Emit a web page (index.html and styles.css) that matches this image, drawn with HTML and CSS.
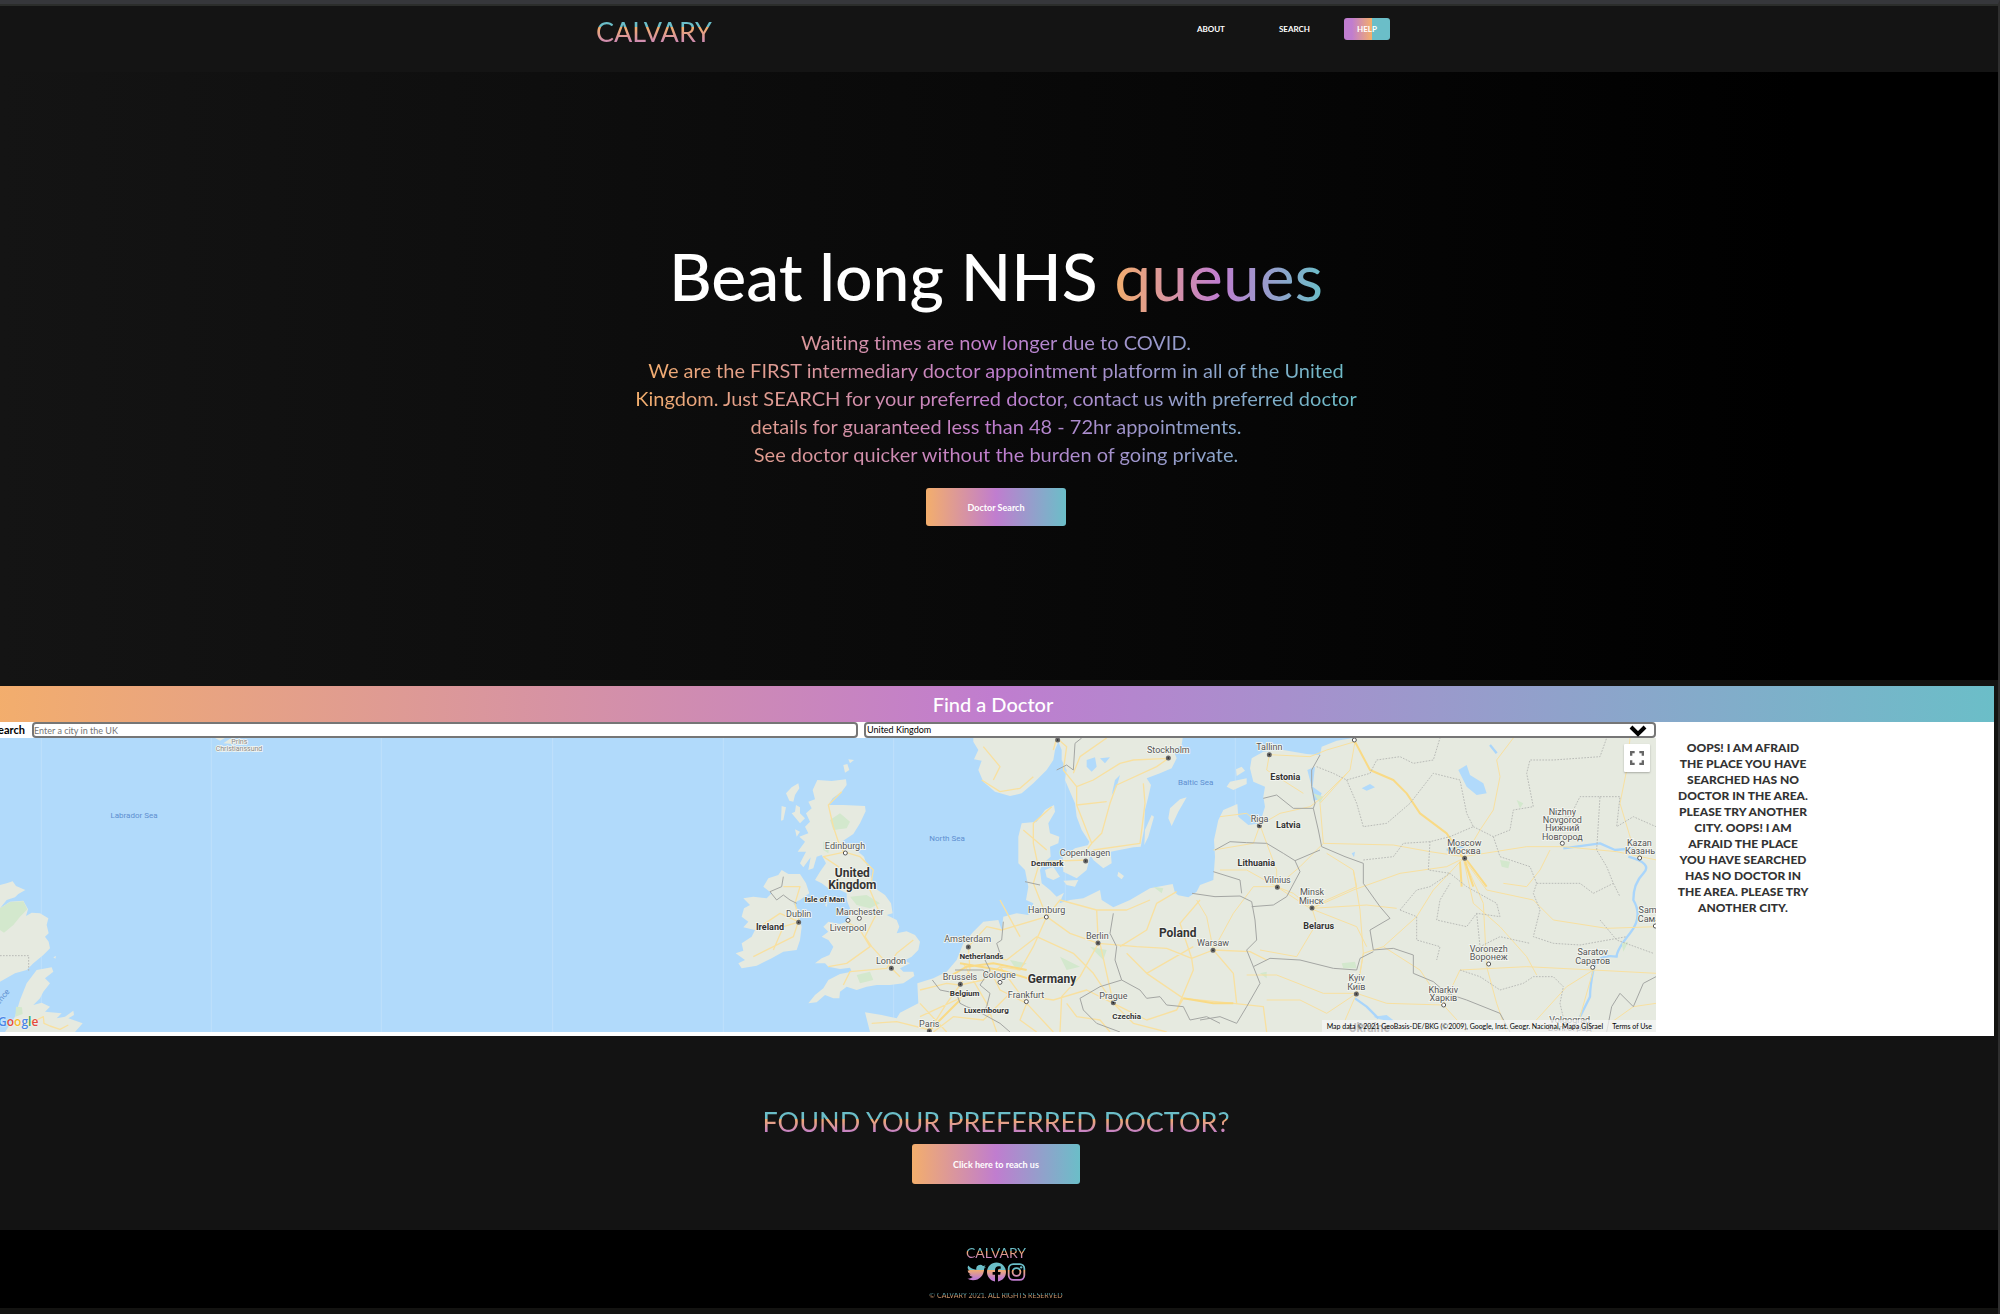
FILE: index.html
```html
<!DOCTYPE html>
<html lang="en">
<head>
<meta charset="utf-8">
<title>Calvary</title>
<link rel="stylesheet" href="styles.css">
</head>
<body>
<header class="navbar">
  <div class="navbar-inner">
    <a class="logo text-vertical" href="#">CALVARY</a>
    <nav class="nav">
      <a class="nav-link" href="#about">ABOUT</a>
      <a class="nav-link" href="#search">SEARCH</a>
      <a class="nav-button" href="#help">HELP</a>
    </nav>
  </div>
</header>

<section class="hero" id="about">
  <h1 class="hero-title">Beat long NHS <span class="text-horizontal">queues</span></h1>
  <p class="hero-text text-horizontal">Waiting times are now longer due to COVID.<br>We are the FIRST intermediary doctor appointment platform in all of the United Kingdom. Just SEARCH for your preferred doctor, contact us with preferred doctor details for guaranteed less than 48 - 72hr appointments.<br>See doctor quicker without the burden of going private.</p>
  <button class="button" type="button">Doctor Search</button>
</section>

<section class="finder" id="search">
  <h2 class="finder-title">Find a Doctor</h2>
  <div class="finder-body">
    <div class="finder-main">
      <form class="finder-form">
        <label class="finder-label" for="city">Search</label>
        <input class="field city" id="city" type="text" placeholder="Enter a city in the UK">
        <div class="select-wrap">
          <select class="field" aria-label="Country"><option>United Kingdom</option></select>
          <svg class="chevron" viewBox="0 0 18 12" aria-hidden="true"><path d="M2 2 9 9 16 2"/></svg>
        </div>
      </form>
      <div class="map">
        <svg class="map-art" viewBox="-24 0 4992 882" preserveAspectRatio="xMaxYMin slice" role="img" aria-label="Map of Europe">
          <g class="tiles"><path d="M124 0V882M634 0V882M1144 0V882M1658 0V882M2170 0V882M2681 0V882M3196 0V882M3706 0V300"/></g>
          <g transform="translate(0 -204)">
            <path class="land" d="M-40 640 0 645 20 640 38 634 48 648 76 660 55 672 45 682 20 690 0 715 30 695 70 692 84 718 78 738 95 728 120 730 145 745 140 765 146 790 135 800 146 815 150 835 130 855 100 880 80 900 45 910 0 935-40 950ZM110 900 155 892 160 905 135 925 150 940 130 965 120 985 100 1005 125 998 150 1010 135 1025 185 1030 170 1045 195 1040 220 1022 222 1035 205 1045 248 1060 225 1086H15L45 1040 60 990 80 940ZM645 204 660 212 675 204ZM670 220 690 206 715 216 700 222ZM160 862 168 858 166 866Z"/>
            <path class="park" d="M0 715 30 696 70 694 82 718 60 740 40 765 12 788 0 780ZM48 1010 66 1012 68 1032 46 1040Z"/>
            <path class="admin" d="M0 857H86V902"/>
            <path class="road" d="M60 1065 110 1050 130 1040 132 1060 150 1068 180 1078 205 1065"/>
          </g>
          <g transform="translate(2100 -204)">
            <path class="land" d="M352 330 395 333 438 328 440 345 425 365 398 385 385 405 430 405 495 408 497 424 480 460 460 492 425 515 475 545 492 560 507 605 525 655 555 675 573 700 578 730 560 735 590 750 598 770 590 790 620 784 645 795 660 815 655 840 635 860 612 872 630 880 600 895 610 905 640 905 643 918 610 940 570 945 530 945 500 950 470 960 440 950 420 965 418 985 400 985 375 975 350 997 325 1000 345 975 370 955 385 930 420 912 455 905 450 893 420 897 385 890 375 880 345 880 365 865 388 855 400 830 385 810 365 800 385 785 370 770 385 755 420 762 440 755 452 720 440 690 440 670 420 660 385 655 365 640 345 630 360 605 378 580 365 555 350 560 340 595 325 600 332 562 310 592 300 580 318 545 293 545 315 515 298 500 325 490 315 470 330 455 318 430 335 415 325 395 345 388 338 360Z"/>
            <path class="land" d="M245 600 265 612 300 612 318 640 328 670 300 690 280 700 295 720 298 745 305 770 300 810 290 840 250 845 215 865 170 887 125 895 115 880 135 870 107 850 130 842 125 820 155 800 165 780 130 772 145 755 125 740 132 715 150 705 130 685 160 680 200 685 215 670 190 650 205 625 235 615ZM295 340 298 355 285 375 280 395 268 392 258 370 275 352ZM245 408 258 412 250 450 243 452ZM288 405 300 412 300 430 315 445 300 460 275 430 285 425ZM430 285 442 282 448 300 435 308ZM445 268 462 270 450 280ZM285 478 300 485 290 500ZM375 705 383 695 380 712Z"/>
            <path class="land" d="M820 204 820 215 835 240 822 268 845 272 835 300 850 335 885 365 930 378 965 370 1000 340 1040 300 1060 270 1065 240 1075 215 1085 240 1085 270 1100 300 1095 330 1112 370 1125 400 1130 440 1145 480 1168 515 1160 535 1180 570 1210 595 1235 580 1232 545 1300 532 1322 530 1332 480 1335 420 1345 380 1353 345 1340 325 1380 310 1415 295 1430 265 1420 240 1445 225 1448 204Z"/>
            <path class="land" d="M1062 405 1065 425 1045 460 1050 490 1078 500 1075 520 1050 530 1052 560 1030 580 1020 600 1025 640 1050 660 1070 680 1092 668 1078 700 1110 690 1150 685 1200 660 1205 690 1240 712 1290 690 1350 655 1418 642 1425 668 1435 676 1465 682 1490 665 1500 645 1540 630 1545 560 1542 510 1555 450 1570 420 1612 402 1615 440 1645 465 1680 460 1695 410 1690 380 1695 350 1660 335 1650 295 1655 265 1690 245 1750 240 1820 252 1860 255 1865 230 1910 212 1960 204H2870V1086H510L495 1027 545 1035 590 1045 600 1028 655 1000 652 940 700 925 740 905 770 870 790 820 820 785 850 755 895 750 905 780 910 740 950 730 985 735 1000 700 978 690 985 650 975 600 955 580 955 500 965 460 1010 455 1035 420ZM1088 562 1125 535 1165 525 1170 560 1160 600 1130 625 1090 605ZM1035 600 1060 590 1080 620 1060 630 1040 622ZM1090 632 1135 630 1125 650 1100 645ZM1255 605 1272 618 1265 628 1252 618ZM1355 435 1362 440 1345 500 1333 525 1335 480ZM1410 415 1440 388 1460 382 1435 425 1415 468 1405 445ZM1590 335 1640 325 1640 342 1600 360 1580 350ZM1608 298 1625 290 1635 302 1610 318Z"/>
            <path class="water" d="M1822 300 1845 290 1838 350 1865 370 1858 388 1840 392 1835 350ZM2275 300 2300 285 2310 315 2350 340 2360 370 2330 375 2300 350ZM1985 355 2010 342 2025 352 2000 362ZM1160 270 1185 262 1190 290 1175 305 1160 290ZM1235 375 1245 330 1260 315 1250 350ZM1200 265 1230 262 1215 280ZM1955 550 1965 545 1962 562ZM2020 1040 2060 1035 2090 1058 2040 1048Z"/>
            <path class="river" d="M2785 560Q2860 580 2830 610T2800 690Q2830 740 2790 790T2750 860Q2690 850 2680 900T2670 980L2640 1040M1965 985 2000 1010 2035 1045M2370 225 2390 250M2240 540 2290 530M2590 535 2700 520 2745 540 2800 535"/>
            <path class="park" d="M390 450 420 430 450 455 440 475 400 480ZM450 680 500 675 540 700 510 715 470 705ZM470 915 510 905 520 930 480 940ZM1925 880 1965 875 1970 895 1930 895ZM1360 650 1390 655 1385 670ZM1170 830 1220 840 1210 870ZM2400 570 2430 575 2425 595 2405 590ZM930 870 980 880 950 900ZM1080 860 1140 890 1100 900ZM1840 370 1870 380 1860 400ZM2450 390 2470 400 2460 415ZM1680 910 1700 905 1700 925ZM2765 820 2785 815 2770 845ZM370 515 390 510 385 550 370 540Z"/>
            <path class="road" d="M425 365 385 405 400 470 415 515 430 545 480 560 520 600 510 660 535 720 495 800 515 830 570 890 600 920M385 890 440 880 510 830 480 780 440 755M430 945 450 905 560 895 590 850 640 810M400 650 430 600 370 560 440 545M300 755 250 770 220 840M295 755 240 730 165 780M295 755 280 800 160 860M298 755 285 700 300 650 250 650M845 330 900 365 960 355 1000 320M850 230 900 290 880 330M1060 240 1070 204 1100 230 1090 300 1130 350 1130 405 1175 520 1160 540M1405 265 1370 290 1250 345 1230 400 1205 490 1175 520M1130 405 1220 395M1130 350 1180 330 1260 280 1300 270 1405 265M1330 340 1335 400 1320 520 1180 540M1120 310 1140 260 1220 204M1055 410 1000 460 1000 520 1015 590 1000 640 1040 740M970 480 1040 540M1020 575 1160 570"/>
            <path class="road" d="M515 1060 590 1055 690 1080 740 1000 780 945 810 900 805 830 860 770 905 780 1040 740 1110 790 1195 820 1310 830 1400 835 1475 865 1540 840 1650 845 1700 870M660 960 740 940 780 945 850 930 900 890 960 900 1000 830 1040 740 1080 690 1190 720 1195 820 1140 920 1085 980 1080 1086M700 1086 760 1040 850 1050 930 970 1060 990 1160 960 1240 1000 1200 820M900 890 980 1000 960 1050 1010 1086M870 900 900 960 980 1000 1060 1086M840 850 920 870 1010 800 1120 850 1180 910 1240 1000M1240 1000 1300 1060 1400 1086M1240 1000 1340 1050 1430 1020 1480 900 1475 865 1440 760 1500 690M1260 830 1340 780 1370 700 1430 665M1190 720 1280 720 1350 690M1100 1000 1130 1040 1200 1050 1230 1086M1430 1020 1450 985 1600 1000 1690 1010 1700 1086M1540 840 1600 910 1610 1000M1280 850 1340 910 1450 985M1340 910 1480 830M660 1000 740 1086M660 1040 790 980M790 880 860 1000 890 1086M900 690 960 800"/>
            <path class="road thin" d="M1540 840 1520 740 1490 690M1540 840 1600 730 1660 650 1730 650 1830 715 1970 770 2000 830M1540 540 1660 520 1680 465 1640 430 1560 440M1680 465 1740 430 1830 410 1870 380 1950 300 1965 215M1708 254 1830 260 1880 240 1965 215M1708 254 1700 300 1810 370M1680 465 1700 520 1730 600 1730 650M1560 600 1640 600 1730 650 1800 590 1870 520 2080 525 2190 545 2290 560 2480 530 2590 530 2750 545 2870 570M1870 520 1860 400 1950 300M1836 715 1960 660 2100 610 2240 590 2290 565M1836 715 1780 670 1730 650M1836 715 1880 690 1970 650 1960 600 1880 550M1836 715 1850 760 1790 860 1680 840M1836 715 2000 705 2090 715M2290 565 2200 660 2150 740 2050 830 1990 850 1970 970M2290 565 2320 700 2400 770 2480 860 2510 915M2290 565 2360 660 2500 690 2560 750 2720 775 2870 770M2290 565 2350 700 2360 890 2390 1000 2420 1086M2290 565 2340 480 2380 420 2400 320 2390 270 2440 204M1970 970 2060 1000 2230 1005 2280 900 2480 890 2680 900 2870 910M1970 970 1870 970 1730 915 1640 915M1970 970 1880 1030 1800 990 1700 990M1970 970 1990 850 1980 720 1960 600M1970 970 1920 1086M2230 1005 2160 900 2050 830M2230 1005 2280 1060 2300 1086M2680 900 2640 1040 2680 1086M2680 900 2600 950 2500 1060M2790 204 2780 300 2760 400 2790 500 2820 560M2730 1060 2800 1010 2868 1000M2550 540 2520 600 2480 650 2410 640"/>
            <path class="road trunk" d="M1965 215 2010 300 2080 330 2120 370 2160 430 2240 490 2290 565M2280 575 2285 650M2295 575 2320 650M2300 570 2360 650M730 930 800 890 880 880 980 900M780 880 900 900 1000 930M690 1080 780 990M1450 985 1540 1000 1600 1000"/>
            <path class="border" d="M1070 300 1100 285 1120 300 1125 220 1145 204M975 635 1020 645M910 755 905 810 890 820 900 850 855 870 870 900 840 945 870 970 860 1010 845 1030 900 1060 930 1086M697 930 720 960 770 970 780 1000 800 1010 850 1030M765 900 800 900 850 900 860 920M250 620 245 650 210 665 230 690 250 675 270 690 290 700M1240 730 1230 790 1250 830 1245 870 1265 930 1320 960 1340 985 1380 980 1400 1005 1450 1010 1470 1050 1520 1040 1560 1060M1265 930 1200 950 1140 985 1150 1020 1190 1060 1260 1086M1476 670 1545 680 1620 678 1655 695 1665 750 1670 810 1640 840 1660 890 1680 940 1640 1010 1610 1060 1560 1040 1500 1050M1540 605 1620 630 1625 670M1545 540 1590 515 1640 518 1700 520 1750 550 1785 572 1860 540M1690 385 1730 375 1780 415 1840 415 1855 480 1865 530 1935 560 1990 580 1990 640 2040 710 2070 745 2010 780 2020 840 2080 835 2140 855 2140 910 2200 935 2240 970 2300 990 2400 1030 2430 1086M1785 572 1800 605 1760 680 1720 705 1655 710M1860 255 1835 300 1835 350 1845 400 1840 415M1660 890 1710 865 1800 870 1900 895 1970 900 1980 865 2020 845M2720 1086 2735 1010 2760 970 2800 1010 2830 940 2868 920"/>
            <path class="admin" d="M1850 290 1900 310 1940 330 2010 310 2030 270 2100 260 2140 280 2200 270 2220 204M1940 330 1970 400 1990 470 2060 460 2130 400 2200 310 2280 330 2300 430 2320 470 2250 500 2190 515 2185 600 2250 610M2320 470 2380 500 2430 480 2440 420 2500 410 2480 310 2490 270 2560 270 2700 260 2720 204M2380 500 2400 560 2490 590 2510 640 2500 670 2520 720 2500 800 2560 820 2640 825 2780 800M2510 640 2640 640 2680 670 2740 640 2720 590 2690 540 2700 380 2640 380 2610 440 2550 430M1990 570 2080 560 2110 520 2190 515M2100 720 2150 660 2190 650 2250 610 2300 650 2390 700 2400 740 2330 730 2300 770 2210 750 2220 690 2250 640M2100 720 2150 740 2150 810 2220 830 2210 870M2330 730 2340 830 2400 800 2490 820M2280 900 2340 920 2400 960 2470 940 2500 920 2560 920 2590 950 2580 1000 2600 1086M2700 380 2760 380 2750 470 2800 440 2868 470M2740 640 2760 680M2700 750 2750 810 2860 850"/>
            <g class="dots">
              <circle cx="436" cy="549" r="6"/><circle cx="478" cy="745" r="6"/><circle cx="444" cy="751" r="6"/><circle cx="1039" cy="741" r="6"/><circle cx="900" cy="937" r="6"/><circle cx="979" cy="995" r="6"/><circle cx="1963" cy="210" r="6"/><circle cx="2587" cy="520" r="6"/><circle cx="2819" cy="564" r="6"/><circle cx="2366" cy="882" r="6"/><circle cx="2678" cy="892" r="6"/><circle cx="2231" cy="1005" r="6"/><circle cx="2866" cy="768" r="6"/>
            </g>
            <g class="capitals">
              <circle cx="296" cy="757" r="5"/><circle cx="574" cy="895" r="5"/><circle cx="805" cy="831" r="5"/><circle cx="781" cy="943" r="5"/><circle cx="688" cy="1083" r="5"/><circle cx="1157" cy="573" r="5"/><circle cx="1194" cy="819" r="5"/><circle cx="1240" cy="998" r="5"/><circle cx="1073" cy="210" r="5"/><circle cx="1405" cy="264" r="5"/><circle cx="1708" cy="254" r="5"/><circle cx="1678" cy="467" r="5"/><circle cx="1732" cy="652" r="5"/><circle cx="1836" cy="714" r="5"/><circle cx="1539" cy="841" r="5"/><circle cx="2294" cy="565" r="5"/><circle cx="1969" cy="972" r="5"/>
            </g>
            <g class="city-name">
              <text x="435" y="537">Edinburgh</text><text x="296" y="742">Dublin</text><text x="479" y="734">Manchester</text><text x="444" y="782">Liverpool</text><text x="573" y="881">London</text><text x="803" y="817">Amsterdam</text><text x="780" y="930">Brussels</text><text x="898" y="924">Cologne</text><text x="978" y="984">Frankfurt</text><text x="688" y="1071">Paris</text><text x="1155" y="559">Copenhagen</text><text x="1040" y="729">Hamburg</text><text x="1192" y="807">Berlin</text><text x="1240" y="986">Prague</text><text x="1405" y="250">Stockholm</text><text x="1708" y="240">Tallinn</text><text x="1679" y="456">Riga</text><text x="1732" y="640">Vilnius</text><text x="1836" y="676">Minsk</text><text x="1834" y="701">Мінск</text><text x="1539" y="829">Warsaw</text><text x="2293" y="529">Moscow</text><text x="2293" y="553">Москва</text><text x="2587" y="434">Nizhny</text><text x="2587" y="459">Novgorod</text><text x="2587" y="484">Нижний</text><text x="2587" y="509">Новгород</text><text x="2818" y="527">Kazan</text><text x="2820" y="553">Казань</text><text x="2366" y="847">Voronezh</text><text x="2366" y="871">Воронеж</text><text x="2678" y="855">Saratov</text><text x="2678" y="881">Саратов</text><text x="1970" y="934">Kyiv</text><text x="1969" y="960">Київ</text><text x="2230" y="968">Kharkiv</text><text x="2230" y="994">Харків</text><text x="2609" y="1058">Volgograd</text><text x="2609" y="1084">Волгоград</text><text x="2862" y="730">Samara</text><text x="2862" y="756">Самара</text>
            </g>
            <g class="country">
              <text x="374" y="697">Isle of Man</text><text x="1042" y="587">Denmark</text><text x="844" y="866">Netherlands</text><text x="794" y="978">Belgium</text><text x="859" y="1029">Luxembourg</text><text x="1280" y="1048">Czechia</text>
            </g>
            <g class="country medium">
              <text x="210" y="779">Ireland</text><text x="1756" y="330">Estonia</text><text x="1765" y="474">Latvia</text><text x="1669" y="587">Lithuania</text><text x="1856" y="777">Belarus</text>
            </g>
            <g class="country large">
              <text x="457" y="621">United</text><text x="457" y="657">Kingdom</text><text x="1056" y="938">Germany</text><text x="1433" y="802">Poland</text><text x="2008" y="1086">Ukraine</text>
            </g>
            <g class="sea"><text x="741" y="513">North Sea</text><text x="1487" y="345">Baltic Sea</text></g>
          </g>
          <g class="sea" transform="translate(0 -204)"><text x="402" y="443">Labrador Sea</text><text x="-12" y="1016" transform="rotate(-50 -12 1016)">St Lawrence</text></g>
          <g class="village" transform="translate(0 -204)"><text x="718" y="222">Prins</text><text x="717" y="242">Christianssund</text></g>
        </svg>
        <div class="google" aria-label="Google"><span class="g-blue">G</span><span class="g-red">o</span><span class="g-yellow">o</span><span class="g-blue">g</span><span class="g-green">l</span><span class="g-red">e</span></div>
        <button class="fullscreen" type="button" aria-label="Full screen"><svg viewBox="0 0 12 12"><path d="M1 4V1H4M8 1H11V4M11 8V11H8M4 11H1V8"/></svg></button>
        <div class="credits"><span>Map data ©2021 GeoBasis-DE/BKG (©2009), Google, Inst. Geogr. Nacional, Mapa GISrael</span><a href="#terms">Terms of Use</a></div>
      </div>
    </div>
    <aside class="finder-results">
      <p class="message">OOPS! I AM AFRAID THE PLACE YOU HAVE SEARCHED HAS NO DOCTOR IN THE AREA. PLEASE TRY ANOTHER CITY. OOPS! I AM AFRAID THE PLACE YOU HAVE SEARCHED HAS NO DOCTOR IN THE AREA. PLEASE TRY ANOTHER CITY.</p>
    </aside>
  </div>
</section>

<section class="contact" id="help">
  <h2 class="contact-title text-vertical">FOUND YOUR PREFERRED DOCTOR?</h2>
  <button class="button wide" type="button">Click here to reach us</button>
</section>

<footer class="footer">
  <a class="footer-logo text-vertical" href="#">CALVARY</a>
  <div class="social">
    <a href="#twitter" aria-label="Twitter"><svg viewBox="0 0 16 16"><defs><linearGradient id="brand" gradientUnits="userSpaceOnUse" x1="0" y1="16" x2="0" y2="0"><stop offset=".17" stop-color="#c07dcf"/><stop offset=".62" stop-color="#f3ae6c"/><stop offset=".62" stop-color="#6bbec8"/></linearGradient></defs><path fill="url(#brand)" d="M5.026 15c6.038 0 9.341-5.003 9.341-9.334 0-.14 0-.282-.006-.422A6.685 6.685 0 0 0 16 3.542a6.658 6.658 0 0 1-1.889.518 3.301 3.301 0 0 0 1.447-1.817 6.533 6.533 0 0 1-2.087.793A3.286 3.286 0 0 0 7.875 6.03a9.325 9.325 0 0 1-6.767-3.429 3.289 3.289 0 0 0 1.018 4.382A3.323 3.323 0 0 1 .64 6.575v.045a3.288 3.288 0 0 0 2.632 3.218 3.203 3.203 0 0 1-.865.115 3.23 3.23 0 0 1-.614-.057 3.283 3.283 0 0 0 3.067 2.277A6.588 6.588 0 0 1 .78 13.58a6.32 6.32 0 0 1-.78-.045A9.344 9.344 0 0 0 5.026 15z"/></svg></a>
    <a href="#facebook" aria-label="Facebook"><svg viewBox="0 0 16 16"><path fill="url(#brand)" d="M16 8.049c0-4.446-3.582-8.05-8-8.05C3.58 0-.002 3.603-.002 8.05c0 4.017 2.926 7.347 6.75 7.951v-5.625h-2.03V8.05H6.75V6.275c0-2.017 1.195-3.131 3.022-3.131.876 0 1.791.157 1.791.157v1.98h-1.009c-.993 0-1.303.621-1.303 1.258v1.51h2.218l-.354 2.326H9.25V16c3.824-.604 6.75-3.934 6.75-7.951z"/></svg></a>
    <a href="#instagram" aria-label="Instagram"><svg viewBox="0 0 16 16"><g fill="none" stroke="url(#brand)" stroke-width="1.5"><rect x="1.4" y="1.4" width="13.2" height="13.2" rx="3.8"/><circle cx="8" cy="8" r="3.3"/></g><circle cx="11.9" cy="4.1" r="1" fill="url(#brand)"/></svg></a>
  </div>
  <p class="copyright">© CALVARY 2021. ALL RIGHTS RESERVED</p>
</footer>
</body>
</html>
```

FILE: styles.css
```css
:root {
  --orange: #f3ae6c;
  --purple: #c07dcf;
  --teal: #6bbec8;
  --brand: linear-gradient(to right, var(--orange) 0%, var(--purple) 50%, var(--teal) 100%);
  --brand-up: linear-gradient(to top, var(--purple) 17%, var(--orange) 60%, var(--teal) 60%);
}

* { box-sizing: border-box; }

body {
  margin: 0;
  min-height: 100vh;
  display: flex;
  flex-direction: column;
  background: #131311;
  color: #fff;
  font-family: Lato, "Open Sans", sans-serif;
  font-variant-ligatures: none;
  border-top: 4px solid #36373b;
  border-right: 2px solid #2f2f2f;
}

h1, h2, p { margin: 0; font-weight: 400; }
a { color: inherit; text-decoration: none; }
button, input, select { font-family: inherit; }

.text-horizontal, .text-vertical {
  color: transparent;
  background: var(--brand);
  -webkit-background-clip: text;
  background-clip: text;
}
.text-vertical { background-image: var(--brand-up); }

.navbar {
  background: #141414;
  border-top: 2px solid #2b2d2b;
  padding: 2px 12px 0 0;
  height: 68px;
}
.navbar-inner {
  max-width: 794px;
  margin: 0 auto;
  display: flex;
  justify-content: space-between;
  align-items: flex-start;
}
.logo { font-size: 27px; line-height: 48px; }
.nav { display: flex; margin-top: 10px; font-size: 8px; line-height: 22px; font-weight: 700; }
.nav-link { margin-right: 54px; }
.nav-link + .nav-button { margin-left: -20px; }
.nav-button {
  width: 46px;
  border-radius: 3px;
  text-align: center;
  background: linear-gradient(to right, var(--purple) 17%, var(--orange) 60%, var(--teal) 60%);
}

.hero {
  min-height: 608px;
  padding: 163px 6px 0 0;
  margin-bottom: 6px;
  background: linear-gradient(to right, #141414, #000 90%);
  display: flex;
  flex-direction: column;
  align-items: center;
  text-align: center;
}
.hero-title { font-size: 66px; line-height: 82px; font-weight: 500; margin-bottom: 11px; }
.hero-title span { font-weight: 400; }
.hero-text { font-size: 20px; line-height: 28px; max-width: 724px; margin-bottom: 20px; }

.button {
  width: 140px;
  height: 38px;
  padding: 0;
  border: 0;
  border-radius: 3px;
  background: var(--brand);
  color: #fff;
  font-size: 9px;
  font-weight: 700;
}
.button.wide { width: 168px; height: 40px; }

.finder {
  margin: 0 4px 0 -8px;
  background: #fff;
  color: #111;
}
.finder-title {
  background: var(--brand);
  color: #fff;
  text-align: center;
  font-size: 20px;
  line-height: 36px;
  font-weight: 500;
}
.finder-body { display: flex; }
.finder-main { flex: 1; min-width: 0; padding-bottom: 4px; }
.finder-form { display: flex; height: 16px; align-items: stretch; }
.finder-label { width: 40px; font-size: 11px; line-height: 16px; font-weight: 700; color: #000; }
.field {
  display: block;
  height: 16px;
  min-width: 0;
  padding: 0 1px;
  border: 2px solid #767676;
  border-radius: 4px;
  background: #fff;
  color: #000;
  font-size: 9px;
  line-height: 12px;
}
.field::placeholder { color: #757575; }
.city { flex: 824; margin-right: 6px; padding: 0; }
.select-wrap { flex: 794; min-width: 0; position: relative; }
.select-wrap .field { width: 100%; appearance: none; }
.chevron {
  position: absolute;
  right: 9px;
  top: 3px;
  width: 18px;
  height: 12px;
  fill: none;
  stroke: #000;
  stroke-width: 4;
  pointer-events: none;
}

.map { position: relative; height: 294px; overflow: hidden; background: #b1dafb; }
.map-art { display: block; width: 100%; height: 100%; font-family: Roboto, sans-serif; }
.land { fill: #e6eae0; }
.park { fill: #d3e8cd; }
.water { fill: #b1dafb; }
.tiles { fill: none; stroke: #bfe0fb; stroke-width: 3; }
.river, .road, .border, .admin { fill: none; stroke-linejoin: round; }
.river { stroke: #a9d5fb; stroke-width: 7; }
.road { stroke: #f8e0a0; stroke-width: 4; }
.thin { stroke-width: 3; }
.trunk { stroke: #f9da85; stroke-width: 6; }
.border { stroke: #a4a6a3; stroke-width: 3; }
.admin { stroke: #b9bbb7; stroke-width: 3; stroke-dasharray: 5 4; }
.dots { fill: #fff; stroke: #555; stroke-width: 3; }
.capitals { fill: #222; stroke: #666; stroke-width: 5; }
.map-art text { text-anchor: middle; paint-order: stroke; stroke: #f4f6f1; stroke-width: 5; }
.city-name { font-size: 27px; fill: #555; }
.country { font-size: 24px; font-weight: 700; fill: #333; }
.medium { font-size: 27px; }
.large { font-size: 36px; }
.village { font-size: 21px; fill: #888; }
.map-art .sea text { font-size: 24px; fill: #5e8fd0; stroke: none; }

.google {
  position: absolute;
  left: 6px;
  bottom: 1px;
  font-family: "Open Sans", sans-serif;
  font-size: 12px;
  line-height: 18px;
  font-weight: 600;
  text-shadow: 0 0 2px #fff;
}
.g-blue { color: #4a86e8; }
.g-red { color: #e3493b; }
.g-yellow { color: #f4b92c; }
.g-green { color: #3aa757; }
.fullscreen {
  position: absolute;
  top: 6px;
  right: 6px;
  width: 26px;
  height: 28px;
  padding: 0;
  border: 0;
  border-radius: 1px;
  background: #fff;
  box-shadow: 0 1px 2px #0004;
  display: grid;
  place-items: center;
}
.fullscreen svg { width: 14px; height: 14px; fill: none; stroke: #666; stroke-width: 2; }
.credits {
  position: absolute;
  right: 0;
  bottom: 0;
  display: flex;
  font-size: 7px;
  line-height: 12px;
  color: #000;
}
.credits > * { padding: 0 4px 0 5px; background: #f5f5f5bb; }

.finder-results { width: 338px; padding: 18px 0 0 19px; }
.message { width: 136px; text-align: center; font-size: 12px; line-height: 16px; font-weight: 900; color: #333; }

.contact {
  min-height: 194px;
  padding: 69px 6px 46px 0;
  background: #131313;
  display: flex;
  flex-direction: column;
  align-items: center;
}
.contact-title { font-size: 27px; line-height: 34px; margin-bottom: 5px; }

.footer {
  min-height: 78px;
  padding: 14px 6px 0 0;
  background: #000;
  display: flex;
  flex-direction: column;
  align-items: center;
}
.footer-logo { font-size: 14px; line-height: 18px; }
.social { display: flex; gap: 1px; }
.social a, .social svg { display: block; width: 19px; height: 20px; }
/* The line box is shorter than the glyphs, so the clipped gradient trims them. */
.copyright {
  margin-top: 11px;
  font-size: 7px;
  line-height: 5px;
  color: transparent;
  background: linear-gradient(to top, #d09a70 50%, #5fa5ad 60%);
  -webkit-background-clip: text;
  background-clip: text;
}
```
